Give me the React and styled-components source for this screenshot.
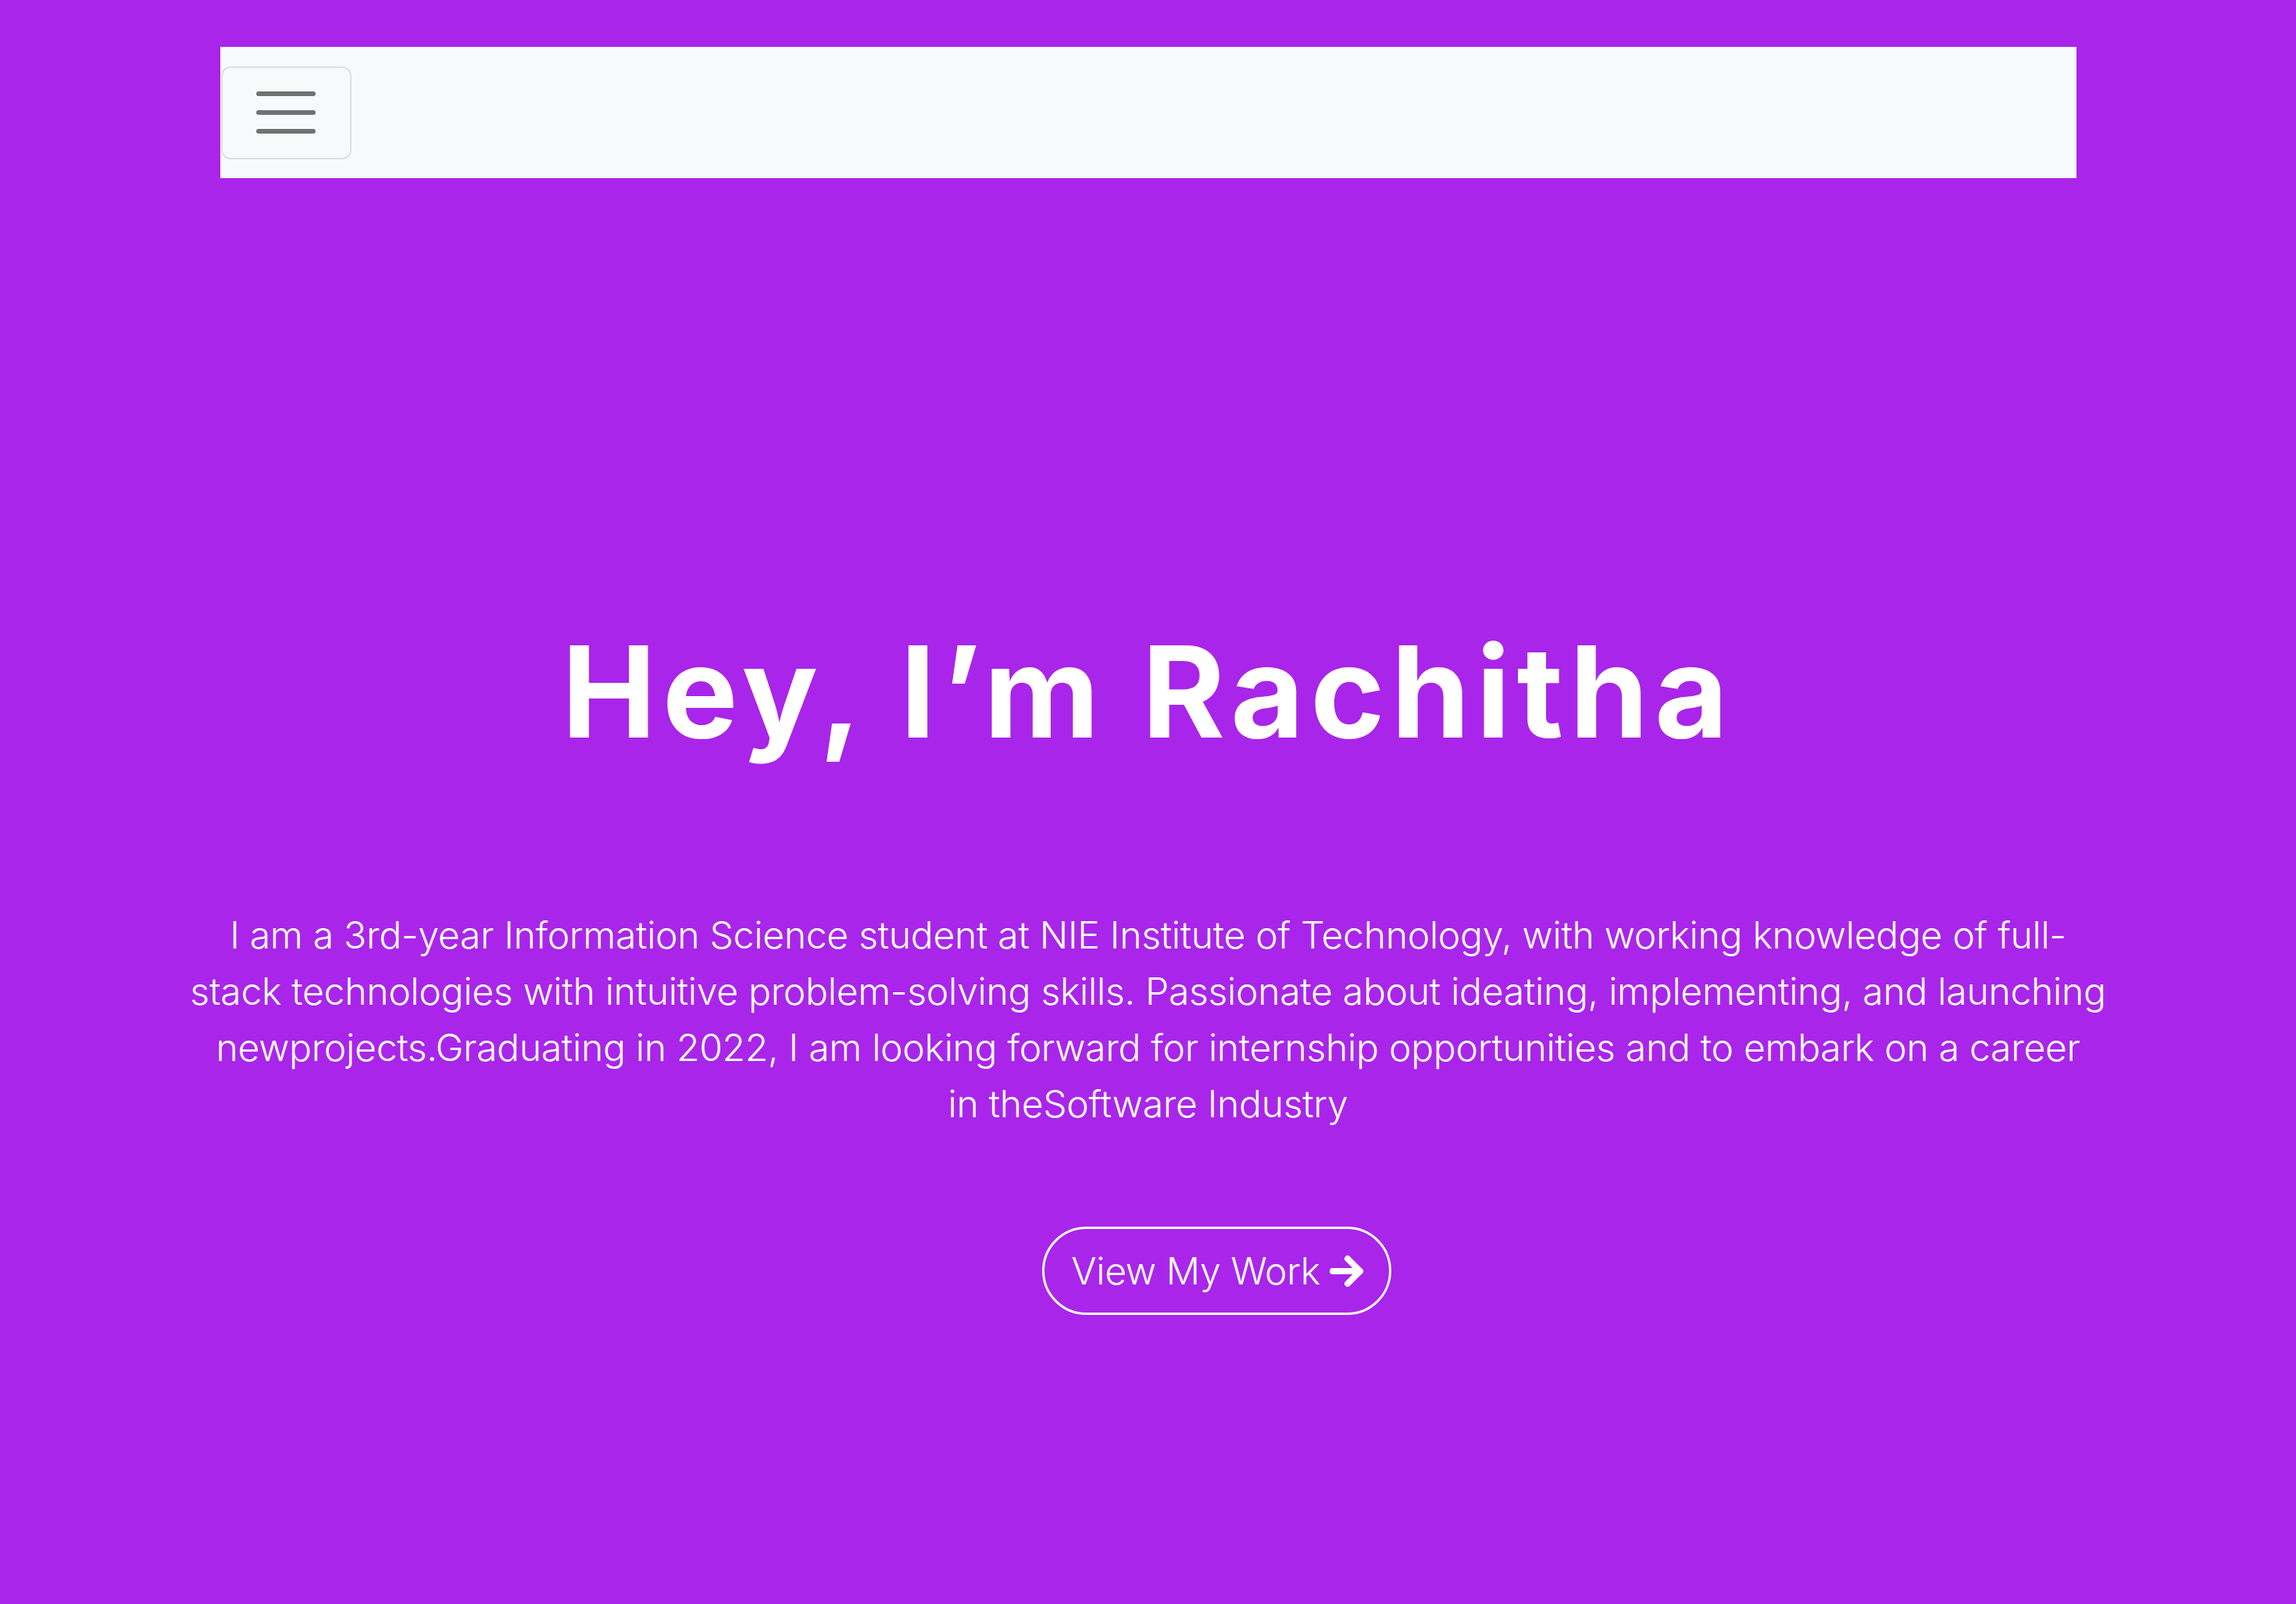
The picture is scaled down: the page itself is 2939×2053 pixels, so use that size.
import React from 'react';
import styled, { createGlobalStyle } from 'styled-components';

const GlobalStyle = createGlobalStyle`
  html, body {
    margin: 0;
    padding: 0;
    background: #a925ea;
  }
  * {
    box-sizing: border-box;
  }
`;

const Page = styled.div`
  min-height: 100vh;
  background: #a925ea;
  font-family: Inter, "Liberation Sans", sans-serif;
  color: #ffffff;
  padding-top: 60px;
  display: flex;
  flex-direction: column;
  align-items: center;
`;

const Navbar = styled.nav`
  width: 2376px;
  height: 168px;
  background: #f8f9fa;
  display: flex;
  align-items: center;
`;

const Toggler = styled.button`
  width: 167px;
  height: 119px;
  margin-left: 1px;
  background: transparent;
  border: 2px solid rgba(0, 0, 0, 0.1);
  border-radius: 12px;
  display: flex;
  align-items: center;
  justify-content: center;
  cursor: pointer;
  padding: 0;
`;

const Hero = styled.section`
  display: flex;
  flex-direction: column;
  align-items: center;
  padding-top: 561px;
`;

const Title = styled.h1`
  margin: 0;
  font-size: 162px;
  line-height: 192px;
  font-weight: 700;
  letter-spacing: 8px;
  text-align: center;
`;

const Intro = styled.p`
  margin: 180px 0 0;
  font-size: 48px;
  line-height: 72px;
  font-weight: 300;
  letter-spacing: -0.25px;
  text-align: center;
  white-space: nowrap;
`;

const Actions = styled.div`
  display: flex;
  justify-content: center;
  margin-top: 121px;
  margin-left: 176px;
`;

const WorkButton = styled.button`
  height: 113px;
  padding: 0 32px 0 34px;
  border: 3px solid #ffffff;
  border-radius: 60px;
  background: transparent;
  color: #ffffff;
  font-family: inherit;
  font-size: 48px;
  font-weight: 300;
  letter-spacing: -0.3px;
  display: flex;
  align-items: center;
  gap: 12px;
  cursor: pointer;
`;

const HamburgerIcon = () => (
  <svg width="76" height="54" viewBox="0 0 76 54" fill="none">
    <path d="M3 3h70M3 27h70M3 51h70" stroke="#717171" strokeWidth="6" strokeLinecap="round" />
  </svg>
);

const ArrowIcon = () => (
  <svg width="44" height="42" viewBox="0 0 44 42" fill="none">
    <path d="M4 21h35M23 5l16 16-16 16" stroke="#ffffff" strokeWidth="8" strokeLinecap="round" strokeLinejoin="round" />
  </svg>
);

export default function App() {
  return (
    <Page>
      <GlobalStyle />
      <Navbar>
        <Toggler type="button" aria-label="Toggle navigation">
          <HamburgerIcon />
        </Toggler>
      </Navbar>

      <Hero>
        <Title>Hey, I’m Rachitha</Title>
        <Intro>
          I am a 3rd-year Information Science student at NIE Institute of Technology, with working knowledge of full-
          <br />
          stack technologies with intuitive problem-solving skills. Passionate about ideating, implementing, and launching
          <br />
          newprojects.Graduating in 2022, I am looking forward for internship opportunities and to embark on a career
          <br />
          in theSoftware Industry
        </Intro>
        <Actions>
          <WorkButton type="button">
            View My Work
            <ArrowIcon />
          </WorkButton>
        </Actions>
      </Hero>
    </Page>
  );
}
